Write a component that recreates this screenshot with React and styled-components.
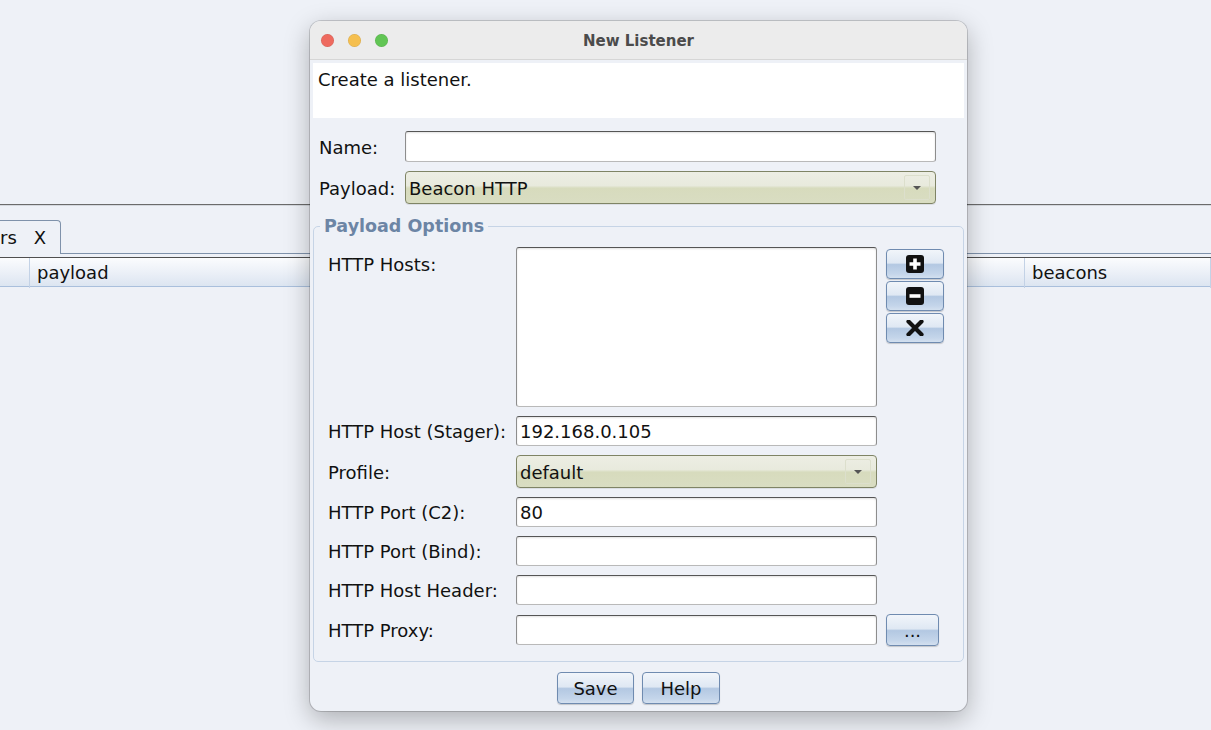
import React from "react";
import styled, { createGlobalStyle } from "styled-components";

const GlobalStyle = createGlobalStyle`
  html, body {
    margin: 0;
    padding: 0;
    height: 100%;
    overflow: hidden;
    background: #eef1f7;
  }
  body {
    font-family: "DejaVu Sans", "Liberation Sans", sans-serif;
    font-size: 18px;
    color: #111;
  }
`;

const Desktop = styled.div`
  position: relative;
  width: 1211px;
  height: 730px;
  overflow: hidden;
  background: #eef1f7;
`;

// background app (the listeners tab behind the dialog)
const TopRule = styled.div`
  margin-top: 204px;
  height: 1px;
  background: #6b6b6b;
  border-bottom: 1px solid #d4d8de;
`;

const TabStrip = styled.div`
  display: flex;
  align-items: flex-end;
  height: 48px;
`;

const Tab = styled.div`
  display: flex;
  align-items: center;
  gap: 17px;
  width: 61px;
  height: 34px;
  border: 1px solid #7f92ab;
  border-left: none;
  border-bottom: none;
  border-top-right-radius: 4px;
  box-sizing: border-box;
  line-height: 32px;
`;

const TabLine = styled.div`
  flex: 1;
  border-bottom: 1px solid #7f92ab;
`;

const TableTop = styled.div`
  margin-top: 3px;
  height: 1px;
  background: #4f4f4f;
`;

const HeaderRow = styled.div`
  display: grid;
  grid-template-columns: 30px 995px 1fr;
  height: 28px;
  background: linear-gradient(#fbfcfe, #e9eef6 60%, #dce5f1);
  border-bottom: 1px solid #a9bfdc;
`;

const HeaderCell = styled.div`
  padding-left: 7px;
  line-height: 30px;
  border-right: 1px solid #c3d2e6;
`;

// dialog window
const Window = styled.div`
  position: absolute;
  left: 310px;
  top: 21px;
  width: 657px;
  height: 690px;
  border-radius: 11px;
  overflow: hidden;
  display: flex;
  flex-direction: column;
  background: #eef1f7;
  box-shadow: 0 0 0 1px rgba(0, 0, 0, 0.16), 0 8px 26px rgba(0, 0, 0, 0.28);
`;

const TitleBar = styled.div`
  display: grid;
  grid-template-columns: 1fr auto 1fr;
  align-items: center;
  height: 38px;
  background: #ececec;
  border-bottom: 1px solid #d6d6d6;
  flex-shrink: 0;
`;

const Lights = styled.div`
  display: flex;
  gap: 14px;
  padding-left: 11px;
`;

const Light = styled.span`
  width: 13px;
  height: 13px;
  border-radius: 50%;
  background: ${({ color }) => color};
  box-shadow: inset 0 0 0 0.5px rgba(0, 0, 0, 0.12);
`;

const Title = styled.div`
  font-weight: bold;
  font-size: 15px;
  color: #4b4b4b;
  margin-top: 1px;
`;

const Body = styled.div`
  flex: 1;
  display: flex;
  flex-direction: column;
  padding: 3px 3px 0 3px;
`;

const Description = styled.div`
  height: 55px;
  background: #fff;
  padding: 6px 5px 0;
  box-sizing: border-box;
  line-height: 22px;
`;

const TopForm = styled.div`
  display: grid;
  grid-template-columns: 86px 531px;
  row-gap: 9px;
  align-items: center;
  padding: 13px 0 0 6px;
`;

const Label = styled.label`
  line-height: 22px;
  white-space: nowrap;
  align-self: ${({ top }) => (top ? "start" : "center")};
  padding-top: ${({ top }) => (top ? "7px" : "2px")};
`;

const TextField = styled.div`
  height: ${({ h }) => h || 31}px;
  box-sizing: border-box;
  background: #fff;
  border: 1px solid #8d8d8d;
  border-top-color: #555;
  border-bottom-color: #b9b9b9;
  border-radius: 3px;
  box-shadow: inset 0 1px 2px rgba(0, 0, 0, 0.12);
  padding-left: 3px;
  line-height: ${({ h }) => (h || 31) - 1}px;
  white-space: nowrap;
  overflow: hidden;
`;

const Combo = styled.div`
  position: relative;
  height: 33px;
  box-sizing: border-box;
  border: 1px solid #7f8465;
  border-radius: 4px;
  background: linear-gradient(#edeee4 0%, #e8eadd 44%, #d7dbbd 52%, #d9ddc2 100%);
  display: flex;
  align-items: center;
  padding: 2px 0 0 3px;
  box-shadow: 0 1px 0 rgba(0, 0, 0, 0.08);
`;

const ComboArrow = styled.span`
  position: absolute;
  right: 5px;
  top: 3px;
  bottom: 3px;
  width: 24px;
  border: 1px solid #dcdfcc;
  border-radius: 2px;
  display: flex;
  align-items: center;
  justify-content: center;

  &::after {
    content: "";
    border-left: 4px solid transparent;
    border-right: 4px solid transparent;
    border-top: 4px solid #555;
  }
`;

const Group = styled.fieldset`
  margin: 12px 0 0 0;
  padding: 11px 14px 15px 14px;
  min-width: 0;
  border: 1px solid #c6d4e6;
  border-radius: 5px;
`;

const Legend = styled.legend`
  margin-left: -8px;
  padding: 0 4px;
  font-weight: bold;
  font-size: 17.5px;
  line-height: 20px;
  color: #6c85a5;
`;

const OptionsGrid = styled.div`
  display: grid;
  grid-template-columns: 179px 361px 58px;
  column-gap: 9px;
  row-gap: 9px;
  align-items: center;
`;

const HostList = styled(TextField)`
  height: 160px;
`;

const SideButtons = styled.div`
  align-self: start;
  display: flex;
  flex-direction: column;
  gap: 2px;
  padding-top: 2px;
`;

const AquaButton = styled.button`
  width: ${({ w }) => w || 58}px;
  height: ${({ h }) => h || 30}px;
  padding: 0;
  border: 1px solid #6f8bb0;
  border-radius: 4px;
  background: linear-gradient(#f1f5fa 0%, #dfe8f3 46%, #b3c8e2 52%, #c4d5ea 85%, #d3e0ef 100%);
  box-shadow: 0 1px 1px rgba(0, 0, 0, 0.18);
  font-family: inherit;
  font-size: 18px;
  color: #111;
  display: flex;
  align-items: center;
  justify-content: center;
`;

const Footer = styled.div`
  display: flex;
  justify-content: center;
  gap: 8px;
  padding-top: 10px;
`;

const PlusIcon = () => (
  <svg width="18" height="18" viewBox="0 0 18 18">
    <rect x="0" y="0" width="18" height="18" rx="3" fill="#111" />
    <path d="M9 3.5v11M3.5 9h11" stroke="#fff" strokeWidth="3.6" />
  </svg>
);

const MinusIcon = () => (
  <svg width="18" height="18" viewBox="0 0 18 18">
    <rect x="0" y="0" width="18" height="18" rx="3" fill="#111" />
    <path d="M3.5 9h11" stroke="#fff" strokeWidth="3.6" />
  </svg>
);

const CrossIcon = () => (
  <svg width="18" height="16" viewBox="0 0 18 16">
    <path d="M2.5 1.5l13 13M15.5 1.5l-13 13" stroke="#111" strokeWidth="4.2" strokeLinecap="round" />
  </svg>
);

const rows = [
  { label: "HTTP Host (Stager):", value: "192.168.0.105" },
  { label: "Profile:", value: "default", combo: true },
  { label: "HTTP Port (C2):", value: "80" },
  { label: "HTTP Port (Bind):", value: "" },
  { label: "HTTP Host Header:", value: "" },
  { label: "HTTP Proxy:", value: "", extra: true },
];

export default function App() {
  return (
    <Desktop>
      <GlobalStyle />
      <TopRule />
      <TabStrip>
        <Tab>
          <span>rs</span>
          <span>X</span>
        </Tab>
        <TabLine />
      </TabStrip>
      <TableTop />
      <HeaderRow>
        <HeaderCell />
        <HeaderCell>payload</HeaderCell>
        <HeaderCell>beacons</HeaderCell>
      </HeaderRow>

      <Window>
        <TitleBar>
          <Lights>
            <Light color="#ee6a5f" />
            <Light color="#f5bf4f" />
            <Light color="#61c554" />
          </Lights>
          <Title>New Listener</Title>
          <span />
        </TitleBar>
        <Body>
          <Description>Create a listener.</Description>
          <TopForm>
            <Label>Name:</Label>
            <TextField />
            <Label>Payload:</Label>
            <Combo>
              Beacon HTTP
              <ComboArrow />
            </Combo>
          </TopForm>

          <Group>
            <Legend>Payload Options</Legend>
            <OptionsGrid>
              <Label top>HTTP Hosts:</Label>
              <HostList />
              <SideButtons>
                <AquaButton><PlusIcon /></AquaButton>
                <AquaButton><MinusIcon /></AquaButton>
                <AquaButton><CrossIcon /></AquaButton>
              </SideButtons>

              {rows.map((r) => (
                <React.Fragment key={r.label}>
                  <Label>{r.label}</Label>
                  {r.combo ? (
                    <Combo>
                      {r.value}
                      <ComboArrow />
                    </Combo>
                  ) : (
                    <TextField h={30}>{r.value}</TextField>
                  )}
                  {r.extra ? (
                    <AquaButton w={53} h={32}>...</AquaButton>
                  ) : (
                    <span />
                  )}
                </React.Fragment>
              ))}
            </OptionsGrid>
          </Group>

          <Footer>
            <AquaButton w={77} h={32}>Save</AquaButton>
            <AquaButton w={78} h={32}>Help</AquaButton>
          </Footer>
        </Body>
      </Window>
    </Desktop>
  );
}
